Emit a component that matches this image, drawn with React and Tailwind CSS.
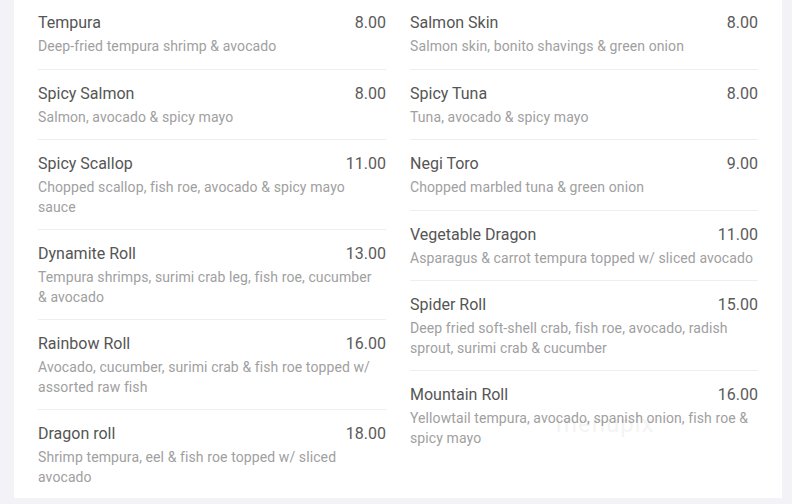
import React from "react";

const left = [
  { name: "Tempura", price: "8.00", desc: "Deep-fried tempura shrimp & avocado" },
  { name: "Spicy Salmon", price: "8.00", desc: "Salmon, avocado & spicy mayo" },
  { name: "Spicy Scallop", price: "11.00", desc: "Chopped scallop, fish roe, avocado & spicy mayo sauce" },
  { name: "Dynamite Roll", price: "13.00", desc: "Tempura shrimps, surimi crab leg, fish roe, cucumber & avocado" },
  { name: "Rainbow Roll", price: "16.00", desc: "Avocado, cucumber, surimi crab & fish roe topped w/ assorted raw fish" },
  { name: "Dragon roll", price: "18.00", desc: "Shrimp tempura, eel & fish roe topped w/ sliced avocado" },
];

const right = [
  { name: "Salmon Skin", price: "8.00", desc: "Salmon skin, bonito shavings & green onion" },
  { name: "Spicy Tuna", price: "8.00", desc: "Tuna, avocado & spicy mayo" },
  { name: "Negi Toro", price: "9.00", desc: "Chopped marbled tuna & green onion" },
  { name: "Vegetable Dragon", price: "11.00", desc: "Asparagus & carrot tempura topped w/ sliced avocado" },
  { name: "Spider Roll", price: "15.00", desc: "Deep fried soft-shell crab, fish roe, avocado, radish sprout, surimi crab & cucumber" },
  { name: "Mountain Roll", price: "16.00", desc: "Yellowtail tempura, avocado, spanish onion, fish roe & spicy mayo" },
];

function Item({ item, last, narrow }) {
  return (
    <div className={`pt-[12px] pb-[12px] ${last ? "" : "border-b border-[#eeeef2]"}`}>
      <div className="flex justify-between items-center h-[24px]">
        <span className="text-[16px] text-[#555555]">{item.name}</span>
        <span className="text-[16px] text-[#5a5a5a]">{item.price}</span>
      </div>
      <div
        className={`mt-[2px] text-[14px] leading-[19.5px] text-[#a0a0a0] tracking-[0.1px] ${
          narrow ? "pr-[6px]" : "pr-0"
        }`}
      >
        {item.desc}
      </div>
    </div>
  );
}

export default function App() {
  return (
    <div
      className="w-[792px] h-[504px] bg-[#f2f2f7] pl-[14px] pr-[10px] overflow-hidden"
      style={{ fontFamily: "Roboto, 'Liberation Sans', sans-serif" }}
    >
      <div className="bg-white h-[498px] px-[24px] grid grid-cols-2 gap-x-[24px] relative">
        <div className="flex flex-col -mt-[1px]">
          {left.map((it, i) => (
            <Item key={it.name} item={it} narrow last={i === left.length - 1} />
          ))}
        </div>
        <div className="flex flex-col -mt-[1px]">
          {right.map((it, i) => (
            <Item key={it.name} item={it} last={i === right.length - 1} />
          ))}
        </div>
        <div className="absolute left-[542px] top-[406px] text-[24px] text-[#000000] opacity-[0.04] pointer-events-none tracking-[1px]">
          menupix
        </div>
      </div>
    </div>
  );
}
